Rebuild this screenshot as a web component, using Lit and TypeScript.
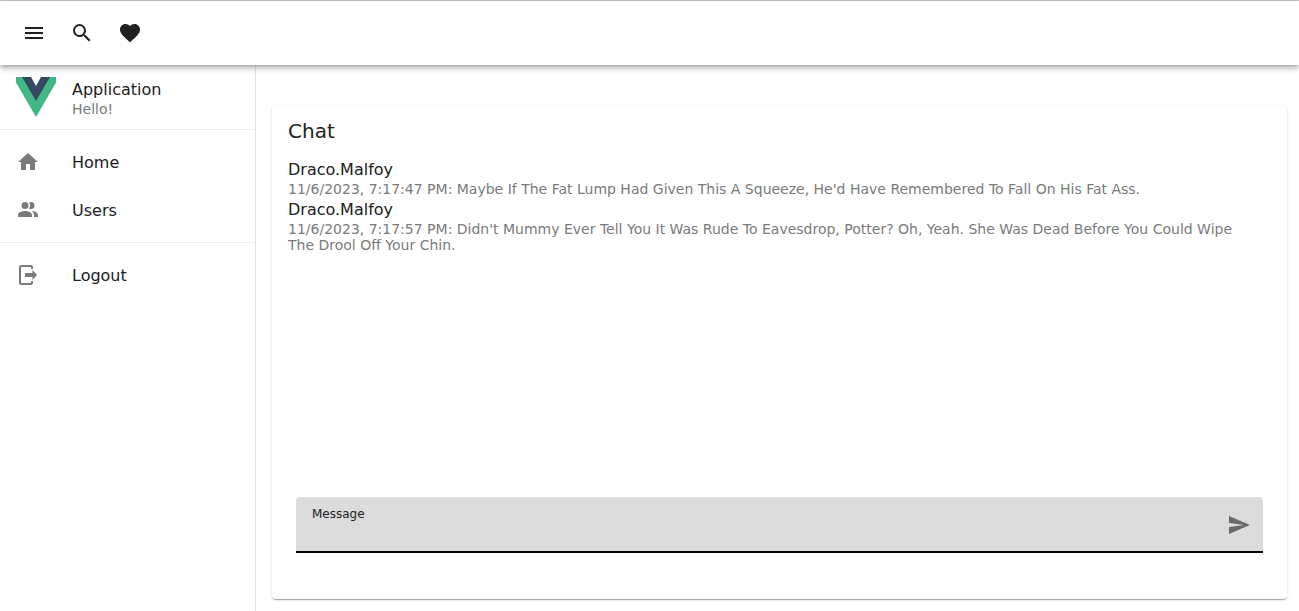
import { LitElement, html, css, svg } from "lit";
import { customElement, property, state } from "lit/decorators.js";

const icons: Record<string, string> = {
  menu: "M3,6H21V8H3V6M3,11H21V13H3V11M3,16H21V18H3V16Z",
  magnify:
    "M9.5,3A6.5,6.5 0 0,1 16,9.5C16,11.11 15.41,12.59 14.44,13.73L14.71,14H15.5L20.5,19L19,20.5L14,15.5V14.71L13.73,14.44C12.59,15.41 11.11,16 9.5,16A6.5,6.5 0 0,1 3,9.5A6.5,6.5 0 0,1 9.5,3M9.5,5C7,5 5,7 5,9.5C5,12 7,14 9.5,14C12,14 14,12 14,9.5C14,7 12,5 9.5,5Z",
  heart:
    "M12,21.35L10.55,20.03C5.4,15.36 2,12.27 2,8.5C2,5.41 4.42,3 7.5,3C9.24,3 10.91,3.81 12,5.08C13.09,3.81 14.76,3 16.5,3C19.58,3 22,5.41 22,8.5C22,12.27 18.6,15.36 13.45,20.03L12,21.35Z",
  home: "M10,20V14H14V20H19V12H22L12,3L2,12H5V20H10Z",
  users:
    "M16 17V19H2V17S2 13 9 13 16 17 16 17M12.5 7.5A3.5 3.5 0 1 0 9 11A3.5 3.5 0 0 0 12.5 7.5M15.94 13A5.32 5.32 0 0 1 18 17V19H22V17S22 13.37 15.94 13M15 4A3.39 3.39 0 0 0 13.07 4.59A5 5 0 0 1 13.07 10.41A3.39 3.39 0 0 0 15 11A3.5 3.5 0 0 0 15 4Z",
  logout:
    "M21 12L16.500 7V10H9V14H16.500V17M15 18V20H5V4H15V6H17V4C17 2.9 16.1 2 15 2H5C3.9 2 3 2.9 3 4V20C3 21.1 3.9 22 5 22H15C16.1 22 17 21.1 17 20V18H15Z",
  send: "M2,21L23,12L2,3V10L17,12L2,14V21Z",
};

@customElement("app-icon")
class AppIcon extends LitElement {
  @property() name = "menu";

  static styles = css`
    :host {
      display: block;
      width: 24px;
      height: 24px;
      flex: none;
    }
    .glyph {
      display: block;
      width: 100%;
      height: 100%;
      fill: currentColor;
    }
  `;

  render() {
    return html`<svg class="glyph" viewBox="0 0 24 24" aria-hidden="true">
      ${svg`<path d=${icons[this.name]}></path>`}
    </svg>`;
  }
}

@customElement("app-root")
class AppRoot extends LitElement {
  @state() private messages = [
    {
      user: "Draco.Malfoy",
      time: "11/6/2023, 7:17:47 PM",
      text: "Maybe If The Fat Lump Had Given This A Squeeze, He'd Have Remembered To Fall On His Fat Ass.",
    },
    {
      user: "Draco.Malfoy",
      time: "11/6/2023, 7:17:57 PM",
      text: "Didn't Mummy Ever Tell You It Was Rude To Eavesdrop, Potter? Oh, Yeah. She Was Dead Before You Could Wipe The Drool Off Your Chin.",
    },
  ];

  static styles = css`
    :host {
      display: flex;
      flex-direction: column;
      box-sizing: border-box;
      min-height: 100vh;
      border-top: 1px solid #c7c7c7;
      background: #fff;
      color: #212121;
      font-family: "DejaVu Sans", sans-serif;
      font-size: 16px;
      line-height: 24px;
    }
    * {
      box-sizing: border-box;
    }
    .bar {
      position: relative;
      z-index: 1;
      display: flex;
      align-items: center;
      height: 64px;
      padding: 0 10px;
      background: #fff;
      box-shadow:
        0 2px 4px -1px rgba(0, 0, 0, 0.2),
        0 4px 5px 0 rgba(0, 0, 0, 0.14),
        0 1px 10px 0 rgba(0, 0, 0, 0.12);
    }
    .icon-button {
      display: grid;
      place-items: center;
      width: 48px;
      height: 48px;
      padding: 0;
      border: 0;
      border-radius: 50%;
      background: none;
      color: inherit;
      cursor: pointer;
    }
    .body {
      display: flex;
      flex: 1;
    }
    .drawer {
      width: 256px;
      flex: none;
      border-right: 1px solid #e0e0e0;
    }
    .brand {
      display: flex;
      align-items: center;
      gap: 16px;
      height: 65px;
      padding: 0 16px;
      border-bottom: 1px solid #ededed;
    }
    .logo {
      width: 40px;
      height: 40px;
    }
    .name {
      display: block;
      padding-top: 1px;
      line-height: 23px;
    }
    .subtitle {
      margin: 0;
      color: #7a7a7a;
      font-size: 14px;
      line-height: 16px;
    }
    .nav {
      padding: 8px 0;
    }
    .nav + .nav {
      border-top: 1px solid #ededed;
    }
    .link {
      display: flex;
      align-items: center;
      gap: 32px;
      height: 48px;
      padding: 0 16px;
      color: inherit;
      text-decoration: none;
    }
    .link app-icon {
      color: #7a7a7a;
    }
    .main {
      display: flex;
      flex: 1;
      min-width: 0;
      padding: 40px 12px 12px 16px;
    }
    .card {
      display: flex;
      flex: 1;
      flex-direction: column;
      min-width: 0;
      border-radius: 4px;
      box-shadow:
        0 2px 1px -1px rgba(0, 0, 0, 0.2),
        0 1px 1px 0 rgba(0, 0, 0, 0.14),
        0 1px 3px 0 rgba(0, 0, 0, 0.12);
    }
    .title {
      margin: 0;
      padding: 10px 16px;
      font-size: 20px;
      font-weight: 400;
      line-height: 32px;
    }
    .messages {
      flex: 1;
      margin: 0;
      padding: 0 32px 0 16px;
      list-style: none;
    }
    .composer {
      display: flex;
      align-items: center;
      height: 56px;
      margin: 0 24px 46px;
      border-radius: 4px 4px 0 0;
      background: #dbdbdb;
      box-shadow: inset 0 -2px #000;
    }
    .field {
      display: flex;
      flex: 1;
      flex-direction: column;
      padding: 8px 0 0 16px;
    }
    .label {
      font-size: 12px;
      line-height: 16px;
    }
    .input {
      width: 100%;
      height: 30px;
      padding: 0;
      border: 0;
      outline: 0;
      background: none;
      color: inherit;
      font: inherit;
    }
    .send {
      color: #696969;
    }
  `;

  private send(event: Event) {
    event.preventDefault();
    const form = event.target as HTMLFormElement;
    const input = form.elements.namedItem("message") as HTMLInputElement;
    if (!input.value.trim()) return;
    this.messages = [
      ...this.messages,
      { user: "Draco.Malfoy", time: new Date().toLocaleString("en-US"), text: input.value },
    ];
    form.reset();
  }

  private link(icon: string, text: string) {
    return html`<a class="link" href="#"
      ><app-icon name=${icon}></app-icon><span class="name">${text}</span></a
    >`;
  }

  render() {
    return html`
      <header class="bar">
        <button class="icon-button" aria-label="Menu"><app-icon name="menu"></app-icon></button>
        <button class="icon-button" aria-label="Search"><app-icon name="magnify"></app-icon></button>
        <button class="icon-button" aria-label="Favorites"><app-icon name="heart"></app-icon></button>
      </header>
      <div class="body">
        <aside class="drawer">
          <div class="brand">
            <svg class="logo" viewBox="0 0 40 40" aria-hidden="true">
              <path fill="#41b883" d="M0 0H40V5.500L20 40L0 5.500Z"></path>
              <path fill="#35495e" d="M6 0H34L20 24Z"></path>
              <path fill="#fff" d="M15 0H25L20 9Z"></path>
            </svg>
            <div>
              <span class="name">Application</span>
              <p class="subtitle">Hello!</p>
            </div>
          </div>
          <nav class="nav">${this.link("home", "Home")}${this.link("users", "Users")}</nav>
          <nav class="nav">${this.link("logout", "Logout")}</nav>
        </aside>
        <main class="main">
          <section class="card">
            <h1 class="title">Chat</h1>
            <ul class="messages">
              ${this.messages.map(
                (m) => html`<li>
                  <span class="name">${m.user}</span>
                  <p class="subtitle">${`${m.time}: ${m.text}`}</p>
                </li>`,
              )}
            </ul>
            <form class="composer" @submit=${this.send}>
              <div class="field">
                <label class="label" for="message">Message</label>
                <input class="input" id="message" name="message" type="text" autocomplete="off" />
              </div>
              <button class="icon-button send" aria-label="Send"><app-icon name="send"></app-icon></button>
            </form>
          </section>
        </main>
      </div>
    `;
  }
}
